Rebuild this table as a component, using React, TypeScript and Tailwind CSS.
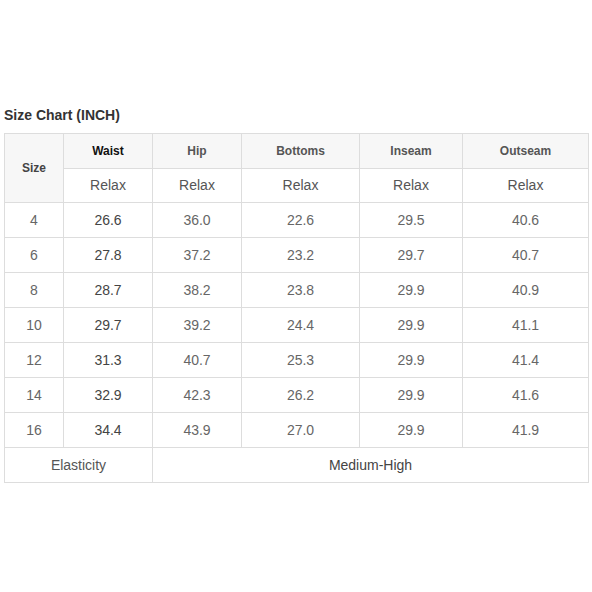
const cols = ["w-[59px]", "w-[89px]", "w-[89px]", "w-[118px]", "w-[103px]", "w-[126px]"];

const heads = ["Hip", "Bottoms", "Inseam", "Outseam"];

const rows: [string, string, string, string, string, string][] = [
  ["4", "26.6", "36.0", "22.6", "29.5", "40.6"],
  ["6", "27.8", "37.2", "23.2", "29.7", "40.7"],
  ["8", "28.7", "38.2", "23.8", "29.9", "40.9"],
  ["10", "29.7", "39.2", "24.4", "29.9", "41.1"],
  ["12", "31.3", "40.7", "25.3", "29.9", "41.4"],
  ["14", "32.9", "42.3", "26.2", "29.9", "41.6"],
  ["16", "34.4", "43.9", "27.0", "29.9", "41.9"],
];

const cell = "border border-[#dddddd] text-center align-middle p-0";

export default function App() {
  return (
    <div className="w-[592px] h-[592px] bg-white font-['Liberation_Sans',Arial,sans-serif] pt-[106px] px-1">
      <h2 className="text-[14px] font-bold text-[#333333] leading-[18px] mb-[9px]">Size Chart (INCH)</h2>
      <table className="border-collapse table-fixed w-[584px]">
        <colgroup>
          {cols.map((c, i) => (
            <col key={i} className={c} />
          ))}
        </colgroup>
        <thead>
          <tr className="h-[35px] bg-[#f7f7f7]">
            <th rowSpan={2} className={`${cell} text-[12px] font-bold text-[#444444]`}>Size</th>
            <th className={`${cell} text-[12px] font-bold text-[#111111]`}>Waist</th>
            {heads.map((h) => (
              <th key={h} className={`${cell} text-[12px] font-bold text-[#555555]`}>{h}</th>
            ))}
          </tr>
          <tr className="h-[34px]">
            {["Waist", ...heads].map((h) => (
              <td key={h} className={`${cell} bg-white text-[14px] text-[#555555]`}>Relax</td>
            ))}
          </tr>
        </thead>
        <tbody>
          {rows.map((r) => (
            <tr key={r[0]} className="h-[35px]">
              {r.map((v, i) => (
                <td key={i} className={`${cell} text-[14px] ${i === 1 ? "text-[#444444]" : "text-[#666666]"}`}>{v}</td>
              ))}
            </tr>
          ))}
          <tr className="h-[35px]">
            <td colSpan={2} className={`${cell} text-[14px] text-[#555555]`}>Elasticity</td>
            <td colSpan={4} className={`${cell} text-[14px] text-[#444444]`}>Medium-High</td>
          </tr>
        </tbody>
      </table>
    </div>
  );
}
